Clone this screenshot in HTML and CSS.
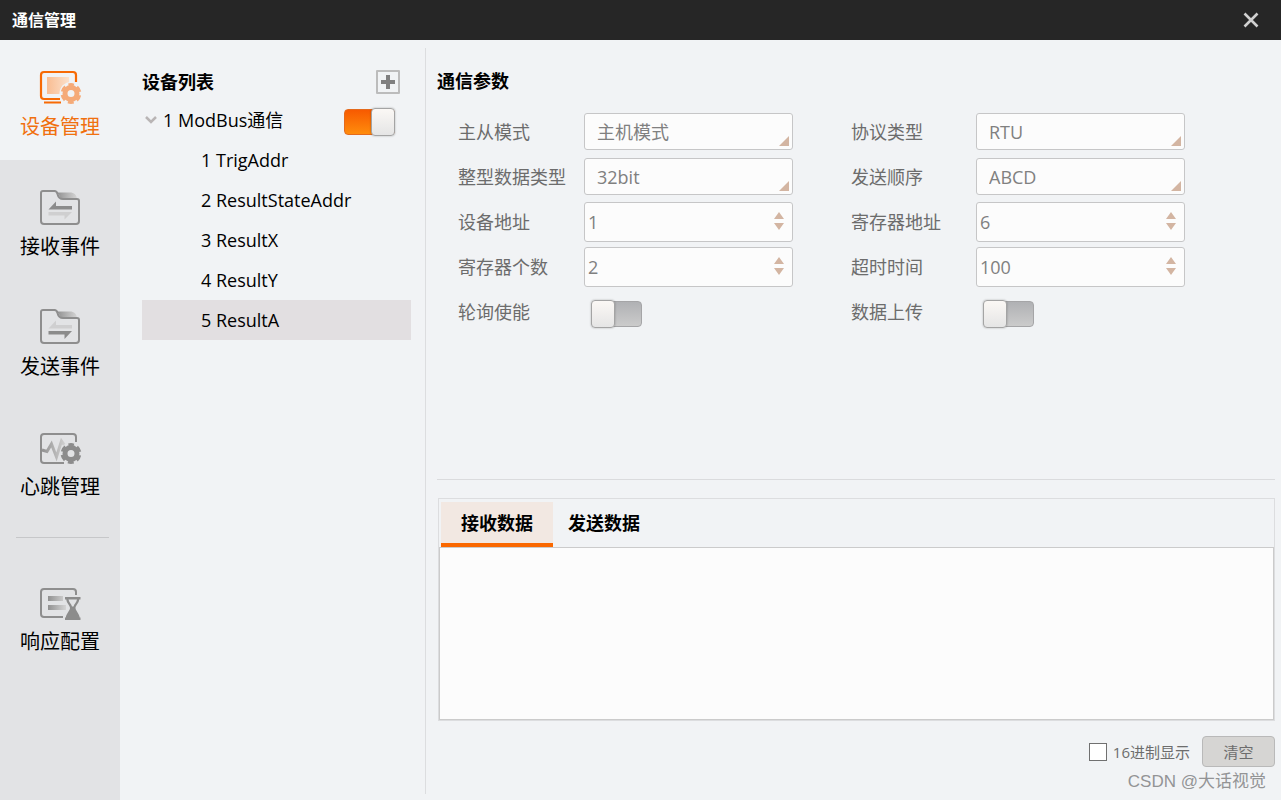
FILE: index.html
```html
<!DOCTYPE html>
<html lang="zh-CN">
<head>
<meta charset="utf-8">
<meta name="viewport" content="width=device-width, initial-scale=1">
<title>通信管理</title>
<link rel="stylesheet" href="styles.css">
</head>
<body>
<svg class="defs" width="0" height="0" aria-hidden="true">
  <defs>
    <linearGradient id="fade-orange" x1="0" y1="0" x2="1" y2="0"><stop offset="0" stop-color="#f9bd92"/><stop offset="1" stop-color="#fbe0cb"/></linearGradient>
    <linearGradient id="fade-gray" x1="0" y1="0" x2="1" y2="0"><stop offset="0" stop-color="#919191"/><stop offset="1" stop-color="#d4d4d4"/></linearGradient>
    <symbol id="gear" viewBox="0 0 22 22">
      <circle cx="11" cy="11" r="6" fill="none" stroke="currentColor" stroke-width="5"/>
      <circle cx="11" cy="11" r="8.600" fill="none" stroke="currentColor" stroke-width="3.600" stroke-dasharray="5.600 3.406" stroke-dashoffset="2.800" transform="rotate(-90 11 11)"/>
    </symbol>
    <symbol id="folder" viewBox="0 0 44 40">
      <path d="M19 4.500h13c4 0 7 2.500 7 7H26c-4 0-4-4-7-7z" fill="url(#fade-gray)"/>
      <path d="M5 3h11.500c2 0 2.500 1 3 3 .7 3 2 5 5.500 5h14c1.500 0 2 .8 2 2v20c0 2-.8 3-3 3H6c-2 0-3-1-3-3V5c0-1.300.7-2 2-2z" fill="none" stroke="#8e8e8e" stroke-width="2"/>
    </symbol>
  </defs>
</svg>

<header class="titlebar">
  <h1 class="titlebar-text">通信管理</h1>
  <button class="close" type="button" aria-label="关闭">
    <svg width="16" height="16" viewBox="0 0 16 16"><path d="M1.500 1.500l13 13M14.500 1.500l-13 13" stroke="#d0d0d0" stroke-width="2.600"/></svg>
  </button>
</header>

<div class="shell">
  <nav class="sidebar">
    <button class="nav-item active" type="button">
      <svg width="44" height="40" viewBox="0 0 44 40">
        <rect x="9" y="9" width="22" height="17" fill="url(#fade-orange)"/>
        <path d="M22 31H6c-2 0-3-1-3-3V7c0-2 1-3 3-3h29c2 0 3 1 3 3v7M6 34.500h17" fill="none" stroke="#f76a05" stroke-width="2.200"/>
        <circle cx="33" cy="25.500" r="11.500" fill="#f1f3f5"/>
        <use href="#gear" x="22" y="14.500" width="22" height="22" color="#f5aa78"/>
      </svg>
      <span>设备管理</span>
    </button>
    <button class="nav-item" type="button">
      <svg width="44" height="40" viewBox="0 0 44 40">
        <use href="#folder" width="44" height="40"/>
        <path d="M10.500 21.500l7.500-8v4.500H34v3.500z" fill="#8b8b8b"/>
        <path d="M10.500 24H34l-7.500 7.500v-4h-16z" fill="#cfcfd0"/>
      </svg>
      <span>接收事件</span>
    </button>
    <button class="nav-item" type="button">
      <svg width="44" height="40" viewBox="0 0 44 40">
        <g transform="translate(0 -1)">
        <use href="#folder" width="44" height="40"/>
        <path d="M10.500 21.500l7.500-8v4.500H34v3.500z" fill="#cfcfd0"/>
        <path d="M10.500 24H34l-7.500 8v-4.500h-16z" fill="#8b8b8b"/>
        </g>
      </svg>
      <span>发送事件</span>
    </button>
    <button class="nav-item" type="button">
      <svg width="44" height="40" viewBox="0 0 44 40">
        <path d="M4 22l5 1.500 4.500-7.500 5 13 5-16 5 7" fill="none" stroke="url(#fade-gray)" stroke-width="3"/>
        <path d="M26 35H6c-2 0-3-1-3-3V9c0-2 1-3 3-3h29c2 0 3 1 3 3v5" fill="none" stroke="#8e8e8e" stroke-width="2"/>
        <circle cx="33" cy="25.500" r="11" fill="#e2e3e5"/>
        <use href="#gear" x="22" y="14.500" width="22" height="22" color="#8c8c8c"/>
      </svg>
      <span>心跳管理</span>
    </button>
    <hr class="nav-rule">
    <button class="nav-item" type="button">
      <svg width="44" height="40" viewBox="0 0 44 40">
        <path d="M25 34H6c-2 0-3-1-3-3V9c0-2 1-3 3-3h29c2 0 3 1 3 3v3" fill="none" stroke="#8e8e8e" stroke-width="2"/>
        <path d="M10 13h15v5H10zM10 22h18v5H10z" fill="url(#fade-gray)"/>
        <path d="M27 14h15.500v2.500h-1.300c-.4 4-3.700 6-3.700 8.500s3.700 5.500 4.200 9.500h.8V37H27v-2.500h.8c.5-4 4.200-7 4.200-9.500s-3.300-4.500-3.700-8.500H27z" fill="#8c8c8c"/>
        <path d="M30.500 16.500h8.500c-.5 3-3 4.500-3.500 7h-1.500c-.5-2.500-3-4-3.500-7z" fill="#e2e3e5"/>
      </svg>
      <span>响应配置</span>
    </button>
  </nav>

  <section class="devices">
    <div class="devices-inner">
      <div class="devices-head">
        <h2 class="heading">设备列表</h2>
        <button class="add" type="button" aria-label="添加设备">
          <svg width="14" height="14" viewBox="0 0 14 14"><path d="M7 0v14M0 7h14" stroke="#808080" stroke-width="4"/></svg>
        </button>
      </div>
      <ul class="tree">
        <li>
          <div class="tree-root">
            <button class="tree-parent" type="button" aria-expanded="true">
              <svg width="12" height="8" viewBox="0 0 12 8"><path d="M1 1l5 5 5-5" fill="none" stroke="#b9b5b5" stroke-width="2.500"/></svg>
              1 ModBus通信
            </button>
            <input class="toggle" type="checkbox" checked aria-label="启用 ModBus通信">
          </div>
          <ul class="tree">
            <li><button class="tree-child" type="button">1 TrigAddr</button></li>
            <li><button class="tree-child" type="button">2 ResultStateAddr</button></li>
            <li><button class="tree-child" type="button">3 ResultX</button></li>
            <li><button class="tree-child" type="button">4 ResultY</button></li>
            <li><button class="tree-child selected" type="button">5 ResultA</button></li>
          </ul>
        </li>
      </ul>
    </div>
  </section>

  <main class="content">
    <section class="params">
      <h2 class="heading">通信参数</h2>
      <form class="fields">
        <label for="mode">主从模式</label>
        <div class="field pick"><select id="mode" class="control"><option>主机模式</option></select></div>
        <label for="protocol">协议类型</label>
        <div class="field pick"><select id="protocol" class="control"><option>RTU</option></select></div>

        <label for="int-type">整型数据类型</label>
        <div class="field pick"><select id="int-type" class="control"><option>32bit</option></select></div>
        <label for="order">发送顺序</label>
        <div class="field pick"><select id="order" class="control"><option>ABCD</option></select></div>

        <label for="device-addr">设备地址</label>
        <div class="field spin"><input id="device-addr" class="control" type="number" value="1"><svg class="arrows" width="10" height="20" viewBox="0 0 10 20"><path d="M5 1l5 7H0zM5 19l5-7H0z" fill="#d3b5a2"/></svg></div>
        <label for="reg-addr">寄存器地址</label>
        <div class="field spin"><input id="reg-addr" class="control" type="number" value="6"><svg class="arrows" width="10" height="20" viewBox="0 0 10 20"><path d="M5 1l5 7H0zM5 19l5-7H0z" fill="#d3b5a2"/></svg></div>

        <label for="reg-count">寄存器个数</label>
        <div class="field spin"><input id="reg-count" class="control" type="number" value="2"><svg class="arrows" width="10" height="20" viewBox="0 0 10 20"><path d="M5 1l5 7H0zM5 19l5-7H0z" fill="#d3b5a2"/></svg></div>
        <label for="timeout">超时时间</label>
        <div class="field spin"><input id="timeout" class="control" type="number" value="100"><svg class="arrows" width="10" height="20" viewBox="0 0 10 20"><path d="M5 1l5 7H0zM5 19l5-7H0z" fill="#d3b5a2"/></svg></div>

        <label for="poll">轮询使能</label>
        <div class="field switch"><input id="poll" class="toggle" type="checkbox"></div>
        <label for="upload">数据上传</label>
        <div class="field switch"><input id="upload" class="toggle" type="checkbox"></div>
      </form>
    </section>

    <section class="data">
      <div class="data-box">
        <div class="tabs" role="tablist">
          <button class="tab current" type="button" role="tab" aria-selected="true">接收数据</button>
          <button class="tab" type="button" role="tab" aria-selected="false">发送数据</button>
        </div>
        <textarea class="log" aria-label="接收数据" readonly></textarea>
      </div>
      <div class="actions">
        <label class="hex"><input class="tick" type="checkbox">16进制显示</label>
        <button class="clear" type="button">清空</button>
      </div>
      <p class="credit">CSDN @大话视觉</p>
    </section>
  </main>
</div>
</body>
</html>
```
FILE: styles.css
```css
* { box-sizing: border-box; }

body {
  margin: 0;
  min-height: 100vh;
  display: flex;
  flex-direction: column;
  background: #f1f3f5;
  color: #000;
  font: 18px/24px "Open Sans", "Noto Sans CJK SC", sans-serif;
}

button, input, select, textarea { font: inherit; color: inherit; }
button { border: 0; padding: 0; background: none; }
h1, h2, p, ul { margin: 0; padding: 0; }
ul { list-style: none; }
.defs { position: absolute; }

.titlebar {
  height: 40px;
  padding: 0 22px 0 12px;
  display: flex;
  align-items: center;
  justify-content: space-between;
  background: #262626;
  color: #fff;
}
.titlebar-text { font-size: 16px; font-weight: 700; }
.close { display: flex; }

.shell {
  flex: 1;
  display: grid;
  grid-template-columns: 120px 306px minmax(0, 1fr);
}

.sidebar { background: #e2e3e5; }
.nav-item {
  width: 100%;
  height: 120px;
  padding-top: 28px;
  display: flex;
  flex-direction: column;
  align-items: center;
  font-size: 20px;
  line-height: 38px;
}
.nav-item svg { flex: none; }
.nav-item.active { background: #f1f3f5; color: #f0700f; }
.nav-rule {
  height: 1px;
  margin: 17px 11px 17px 16px;
  border: 0;
  background: #c6c7c9;
}

.devices { display: flex; padding: 8px 0; }
.devices-inner {
  flex: 1;
  padding: 20px 14px 0 22px;
  border-right: 1px solid #dcdddf;
}
.heading { font-size: 18px; line-height: 26px; font-weight: 700; }
.devices-head {
  display: flex;
  align-items: center;
  justify-content: space-between;
  height: 32px;
  padding: 0 11px 4px 0;
}
.add {
  width: 24px;
  height: 24px;
  display: grid;
  place-items: center;
  border: 2px solid #bcbcbc;
  border-radius: 1px;
}

.tree-root {
  display: flex;
  align-items: center;
  justify-content: space-between;
  height: 40px;
  padding-right: 16px;
}
.tree-parent { display: flex; align-items: center; gap: 6px; padding-left: 3px; }
.tree-root .toggle { margin-top: 4px; }
.tree-child {
  width: 100%;
  height: 40px;
  display: block;
  padding-left: 59px;
  text-align: left;
}
.tree-child.selected { background: #e2dfe1; }

.toggle {
  appearance: none;
  position: relative;
  width: 51px;
  height: 26px;
  margin: 0;
  border: 1px solid #a5a5a7;
  border-radius: 4px;
  background: linear-gradient(#b0b1b4, #cbcbcb);
}
.toggle::after {
  content: "";
  position: absolute;
  box-sizing: border-box;
  top: -2px;
  left: -1px;
  width: 24px;
  height: 28px;
  border: 1px solid #a4a4a4;
  border-radius: 4px;
  background: linear-gradient(#fbf8f5, #e5e5e5);
  box-shadow: 0 0 2px rgba(0, 0, 0, .3);
}
.toggle:checked { border-color: #e46a1c; background: linear-gradient(#f75a00, #ff8c0c); }
.toggle:checked::after { left: auto; right: -1px; }

.content {
  display: flex;
  flex-direction: column;
  padding: 28px 6px 5px 11px;
}
.params {
  flex: 1;
  min-height: 412px;
  border-bottom: 1px solid #dadbdd;
}
.fields {
  display: grid;
  grid-template-columns: 126px 209px 183px 209px;
  grid-auto-rows: 45px;
  align-items: center;
  padding: 15px 0 0 21px;
  color: #6c6c6c;
}
.fields label:nth-of-type(even) { margin-left: 58px; }
.field { position: relative; display: flex; }
.control {
  appearance: none;
  width: 100%;
  height: 40px;
  padding: 0 32px 0 3px;
  border: 1px solid #c6c6c7;
  border-radius: 3px;
  background: #fcfcfc;
  color: #808080;
}
.control[type="number"] { appearance: textfield; }
.control::-webkit-inner-spin-button { appearance: none; }
.pick .control { height: 37px; padding-left: 12px; }
.pick::after {
  content: "";
  position: absolute;
  right: 4px;
  bottom: 4px;
  border-left: 10px solid transparent;
  border-bottom: 10px solid #d3b5a2;
}
.arrows { position: absolute; top: 9px; right: 9px; }
.switch { padding: 4px 0 0 7px; }

.data { padding-top: 18px; }
.data-box {
  border: 1px solid #dcdddf;
  margin-left: 1px;
}
.tabs { display: flex; padding: 3px 0 0 2px; }
.tab {
  height: 45px;
  padding: 0 15px;
  border-bottom: 4px solid transparent;
  font-weight: 700;
}
.tab.current { padding: 0 20px; background: #f2e8e2; border-bottom-color: #fa6800; }
.log {
  display: block;
  width: 100%;
  height: 173px;
  border: 1px solid #cbcbcb;
  background: #fcfcfc;
  resize: none;
}
.actions {
  display: flex;
  justify-content: flex-end;
  align-items: center;
  gap: 12px;
  padding-top: 15px;
  font-size: 15px;
  color: #6d6d6d;
}
.hex { display: flex; align-items: center; gap: 6px; }
.tick {
  appearance: none;
  width: 18px;
  height: 18px;
  margin: 0;
  border: 1px solid #707070;
  background: #fff;
}
.clear {
  width: 73px;
  height: 31px;
  border: 1px solid #b9b9b9;
  border-radius: 4px;
  background: #d6d5d3;
}
.credit {
  padding-right: 9px;
  text-align: right;
  font: 17px/30px "Liberation Sans", "Noto Sans CJK SC", sans-serif;
  color: #939495;
}
```
